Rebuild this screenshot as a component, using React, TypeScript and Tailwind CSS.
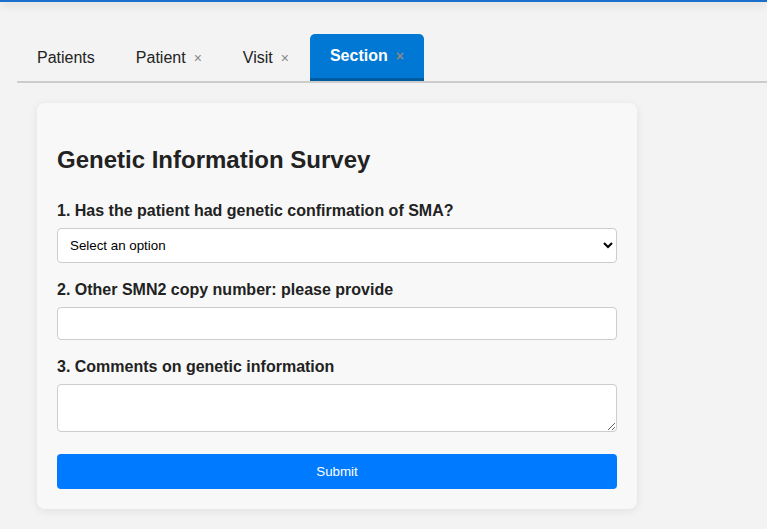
import React from "react";

function Tab({ label, closable, active }: { label: string; closable?: boolean; active?: boolean }) {
  if (active) {
    return (
      <div className="flex items-center pl-5 pr-5 pt-[13px] pb-[13px] bg-[#0078d4] text-white font-bold rounded-t-[5px] border-b-[3px] border-[#005a9e] leading-[18px]">
        <span>{label}</span>
        {closable && <span className="ml-2 text-[14px] text-[#888] font-bold leading-[18px]">×</span>}
      </div>
    );
  }
  return (
    <div className="flex items-center pl-5 pr-[21px] pt-[15px] pb-[11px] text-[#222] border-b-[3px] border-transparent leading-[18px]">
      <span>{label}</span>
      {closable && <span className="ml-2 text-[14px] text-[#888] leading-[18px]">×</span>}
    </div>
  );
}

export default function App() {
  return (
    <div
      className="min-h-[529px] bg-[#f3f3f3] text-[16px]"
      style={{ fontFamily: '"Liberation Sans", Arial, sans-serif' }}
    >
      <div className="h-[2px] bg-[#1b6fcc] shadow-[0_2px_8px_rgba(0,0,0,0.25)]" />
      <div className="pt-[32px] pl-[17px]">
        <div className="flex items-end border-b-2 border-[#cccccc]">
          <Tab label="Patients" />
          <Tab label="Patient" closable />
          <Tab label="Visit" closable />
          <Tab label="Section" closable active />
        </div>
        <div className="px-5 pt-5 pb-5">
          <div className="w-[600px] bg-[#f8f8f8] rounded-[8px] shadow-[0_2px_8px_rgba(0,0,0,0.08)] px-5 pb-5 pt-[43px]">
            <h2 className="text-[24px] font-bold text-[#222] leading-[28px] mb-[28px]">Genetic Information Survey</h2>
            <div className="mb-[18px]">
              <label className="block font-bold text-[#222] leading-[18px] mb-[8px]">
                1. Has the patient had genetic confirmation of SMA?
              </label>
              <select className="block w-full h-[35px] pl-[8px] pr-[4px] border border-[#cccccc] rounded-[4px] bg-white text-[13.33px] text-black">
                <option>Select an option</option>
              </select>
            </div>
            <div className="mb-[18px]">
              <label className="block font-bold text-[#222] leading-[18px] mb-[8px]">
                2. Other SMN2 copy number: please provide
              </label>
              <input type="text" className="block w-full h-[33px] px-[11px] border border-[#cccccc] rounded-[4px] bg-white text-[13.33px]" />
            </div>
            <div className="mb-[22px]">
              <label className="block font-bold text-[#222] leading-[18px] mb-[8px]">
                3. Comments on genetic information
              </label>
              <textarea className="block w-full h-[48px] px-[11px] border border-[#cccccc] rounded-[4px] bg-white text-[13.33px]" />
            </div>
            <button className="block w-full h-[35px] bg-[#007bff] text-white text-[13.33px] rounded-[4px]">
              Submit
            </button>
          </div>
        </div>
      </div>
    </div>
  );
}
